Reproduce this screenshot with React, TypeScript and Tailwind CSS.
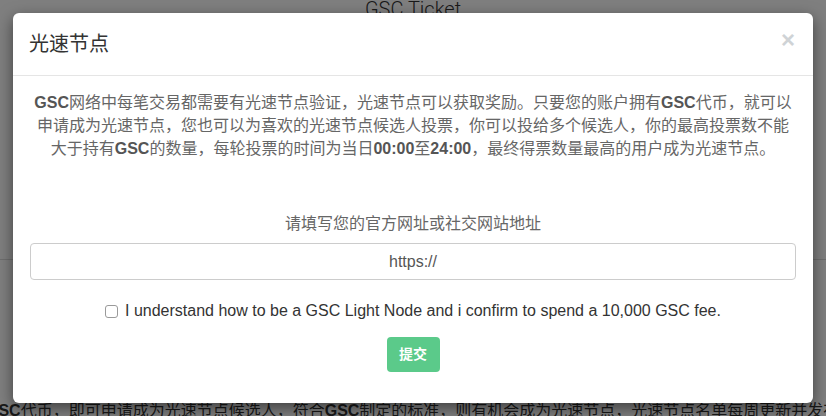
import { useState } from "react";

const cjk = "font-['Liberation_Sans','Noto_Sans_CJK_SC',sans-serif]";

function Backdrop() {
  /* The page behind the modal */
  return (
    <div className="flex h-[416px] flex-col bg-white text-[#333]">
      <h1 className="-mt-[1px] text-center font-['Roboto','Noto_Sans_CJK_SC',sans-serif] text-[20px] font-light leading-[20px]">
        GSC Ticket
      </h1>
      <div className="mt-[240px] border-t border-[#dddddd]" />
      <div className="-ml-[14px] mt-[140px] whitespace-nowrap text-[16px] leading-[22px]">
        <b>GSC</b>代币，即可申请成为光速节点候选人，符合<b>GSC</b>制定的标准，则有机会成为光速节点，光速节点名单每周更新并发布。
      </div>
    </div>
  );
}

export default function App() {
  const [url, setUrl] = useState("");
  const [agree, setAgree] = useState(false);

  return (
    <div className={`relative h-[416px] w-[826px] overflow-hidden ${cjk}`}>
      <Backdrop />

      {/* Modal backdrop + dialog */}
      <div className="absolute inset-0 bg-black/50 px-[13px] pt-[13px]">
        <div className="h-[390px] rounded-[6px] bg-white shadow-[0_5px_15px_rgba(0,0,0,0.5)]">
          {/* Header */}
          <div className="flex h-[63px] items-center justify-between border-b border-[#e5e5e5] pl-[16px] pr-[18px]">
            <h4 className="-mt-[1px] text-[20px] leading-[28px] text-[#333]">光速节点</h4>
            <button className="-mt-[8px] font-['Liberation_Sans',sans-serif] text-[24px] font-bold leading-none text-[#cfd3d6]">
              ×
            </button>
          </div>

          {/* Body */}
          <div className="px-[15px] pt-[15px]">
            <p className="text-center text-[16px] leading-[23px] text-[#666]">
              <b className="text-[#555]">GSC</b>网络中每笔交易都需要有光速节点验证，光速节点可以获取奖励。只要您的账户拥有<b className="text-[#555]">GSC</b>代币，就可以
              <br />
              申请成为光速节点，您也可以为喜欢的光速节点候选人投票，你可以投给多个候选人，你的最高投票数不能
              <br />
              大于持有<b className="text-[#555]">GSC</b>的数量，每轮投票的时间为当日<b className="text-[#555]">00:00</b>至<b className="text-[#555]">24:00</b>，最终得票数量最高的用户成为光速节点。
            </p>

            <div className="mt-[52px] text-center text-[16px] leading-[23px] text-[#666]">
              请填写您的官方网址或社交网站地址
            </div>

            <div className="mt-[8px] px-[2px]">
              <input
                value={url}
                onChange={(e) => setUrl(e.target.value)}
                placeholder="https://"
                className="h-[37px] w-full rounded-[4px] border border-[#cccccc] bg-white text-center text-[16px] text-[#555] outline-none placeholder:text-[#555]"
              />
            </div>

            <label className="mt-[20px] flex items-center justify-center gap-[7px] text-[16px] leading-[22px] text-[#333]">
              <input
                type="checkbox"
                checked={agree}
                onChange={(e) => setAgree(e.target.checked)}
                className="h-[13px] w-[13px] appearance-none rounded-[3px] border border-[#9a9a9a] bg-white"
              />
              <span className="font-['Liberation_Sans',sans-serif]">
                I understand how to be a GSC Light Node and i confirm to spend a 10,000 GSC fee.
              </span>
            </label>

            <div className="mt-[15px] flex justify-center">
              <button className="h-[35px] w-[53px] rounded-[4px] bg-[#5bca8a] text-[14px] font-bold text-white">
                提交
              </button>
            </div>
          </div>
        </div>
      </div>
    </div>
  );
}
